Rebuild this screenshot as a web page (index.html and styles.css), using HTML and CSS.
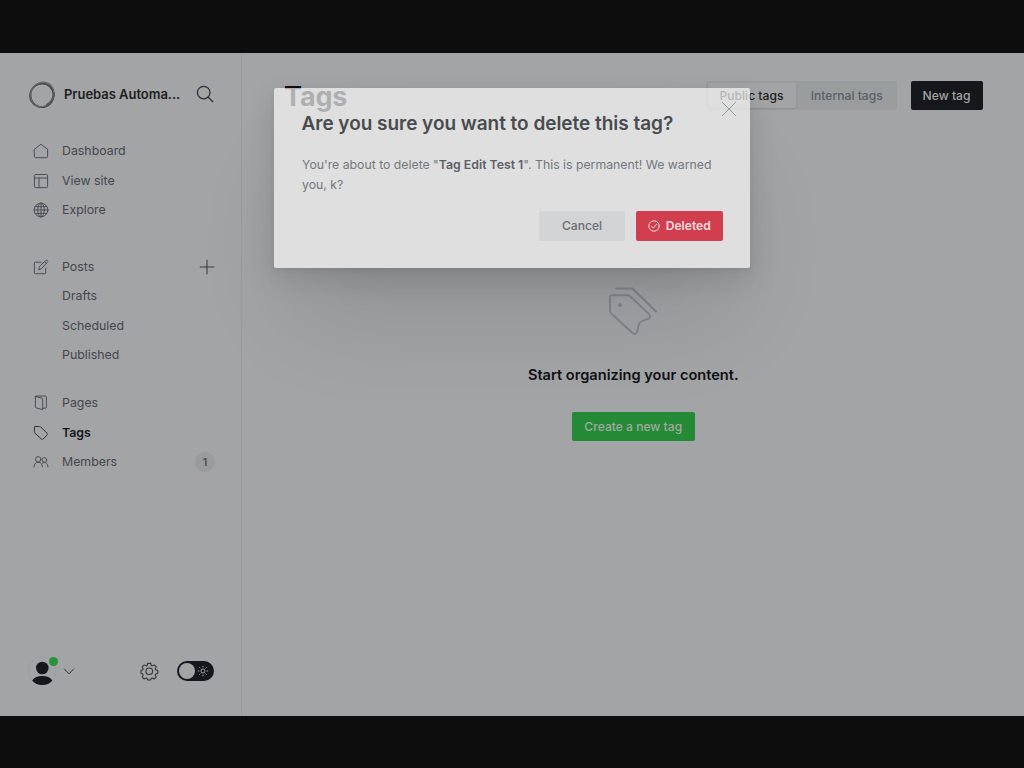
FILE: index.html
```html
<!DOCTYPE html>
<html lang="en">
<head>
<meta charset="utf-8">
<title>Tags</title>
<link rel="stylesheet" href="styles.css">
</head>
<body>
<div class="app">
  <aside class="sidebar">
    <header class="brand">
      <svg class="brand-logo" viewBox="0 0 28 28" fill="none"><ellipse cx="14" cy="14.3" rx="11.6" ry="11.8" stroke="#2d2e30" stroke-width="1.6"/><ellipse cx="13.8" cy="14.2" rx="12.2" ry="11.4" transform="rotate(-38 13.8 14.2)" stroke="#4a4c4f" stroke-width="1.3"/><ellipse cx="14.3" cy="13.5" rx="12.6" ry="11.4" transform="rotate(-62 14.3 13.5)" stroke="#66686b" stroke-width="1.2"/><path d="M25.8 11c.5 5-2.3 11-7.5 13.3" stroke="#55575a" stroke-width="2.2"/></svg>
      <span class="brand-name">Pruebas Automa...</span>
      <svg class="search" viewBox="0 0 18 18" fill="none" stroke="#2d2f33" stroke-width="1.25" stroke-linecap="round"><circle cx="7.7" cy="7.6" r="6.3"/><path d="m12.3 12.2 4.500 4.500"/></svg>
    </header>
    <nav class="nav">
      <ul class="group">
        <li class="item"><svg class="icon" viewBox="0 0 16 16"><path d="M1.400 6.300 8 1.200l6.600 5.100v7.200a1.200 1.200 0 0 1-1.200 1.200H2.600a1.200 1.200 0 0 1-1.200-1.200z"/></svg>Dashboard</li>
        <li class="item"><svg class="icon" viewBox="0 0 16 16"><rect x="1.400" y="1.500" width="13.200" height="13.100" rx="1"/><path d="M1.400 5h13.200M6 5v9.600"/></svg>View site</li>
        <li class="item"><svg class="icon" viewBox="0 0 16 16"><circle cx="8" cy="8" r="6.900"/><ellipse cx="8" cy="8" rx="3.300" ry="6.900"/><path d="M8 1.100v13.800M1.100 8h13.800M2.200 4.600h11.600M2.200 11.400h11.600"/></svg>Explore</li>
      </ul>
      <ul class="group posts">
        <li class="item"><svg class="icon" viewBox="0 0 16 16"><path d="M8 3.200H2.300a.9.9 0 0 0-.9.9v9.700c0 .5.4.9.9.9h9.500c.5 0 .9-.4.9-.9V9.300M5.800 10.400l.7-3L12.600 1.500a1.200 1.200 0 0 1 1.800 1.700L8.500 9.600zM11.400 2.700l1.800 1.700"/></svg>Posts<svg class="plus" viewBox="0 0 16 16"><path d="M8 .7v14.600M.7 8h14.600"/></svg></li>
        <li class="item sub">Drafts</li>
        <li class="item sub">Scheduled</li>
        <li class="item sub">Published</li>
      </ul>
      <ul class="group last">
        <li class="item"><svg class="icon" viewBox="0 0 16 16"><path d="M2.400 1.500 8.900 3.100a1 1 0 0 1 .8 1v10.500l-6.500-1.700a1 1 0 0 1-.8-1V1.800M2.200 1.700c.1-.5.4-.7.8-.7h9.300c.7 0 1.100.5 1.100 1.100v10c0 .7-.4 1.100-1.100 1.100H9.800"/></svg>Pages</li>
        <li class="item active"><svg class="icon" viewBox="0 0 16 16"><path d="M2.200 1.500h4.300c.5 0 .8.100 1.100.4l6.500 6.300c.6.6.6 1.100.1 1.700l-4.100 4.200c-.5.500-1.100.5-1.700 0L1.900 8c-.4-.4-.5-.7-.5-1.200V2.300c0-.5.300-.8.8-.8z"/></svg>Tags</li>
        <li class="item"><svg class="icon" viewBox="0 0 16 16"><circle cx="5.200" cy="5.300" r="2.700"/><path d="M1 12.900c0-2.800 1.600-4.700 4.200-4.700s4.200 1.900 4.200 4.700"/><circle cx="11.400" cy="5.900" r="2.300"/><path d="M9.400 9.100c3-1.600 5.500.3 5.500 3.800"/></svg>Members<span class="count">1</span></li>
      </ul>
    </nav>
    <footer class="footer">
      <div class="avatar">
        <svg viewBox="0 0 30 30"><circle cx="15" cy="15" r="14" fill="none" stroke="#9b9da0" stroke-width="1"/><circle cx="15.300" cy="12" r="6.300" fill="#15171a"/><path d="M5.200 24.600c2-3.300 5.600-4.700 10.100-4.700s8.100 1.400 10.100 4.700C23 27.900 19.500 29.100 15.300 29.100s-7.700-1.200-10.100-4.500z" fill="#15171a"/></svg>
        <span class="status"></span>
      </div>
      <svg class="chevron" viewBox="0 0 12 8"><path d="m1.200 1.800 4.800 5 4.800-5"/></svg>
      <svg class="gear" viewBox="0 0 20 20"><circle cx="10" cy="10" r="3.600"/><path d="M8.400 1.500h3.200l.7 2.300 1 .4 2.100-1.100 2.200 2.200-1.100 2.200.4 1 2.300.7v3.100l-2.300.8-.4 1 1.100 2.100-2.200 2.200-2.200-1.100-1 .4-.6 1.700H8.400l-.7-1.700-1-.4-2.200 1.100-2.200-2.200 1.100-2.100-.4-1-2-.8V9.200l2-.7.4-1-1.100-2.200 2.200-2.200 2.200 1.100 1-.4z"/></svg>
      <div class="switch"><span class="knob"></span><svg class="sun" viewBox="0 0 12 12"><circle cx="6" cy="6" r="2"/><path d="M6 .8v1.500M6 9.700v1.500M.8 6h1.500M9.700 6h1.500M2.300 2.300l1.100 1.100M8.600 8.600l1.100 1.100M9.700 2.300 8.600 3.400M3.400 8.600 2.300 9.700"/></svg></div>
    </footer>
  </aside>
  <main class="main">
    <header class="toolbar">
      <h1 class="title">Tags</h1>
      <div class="tabs"><span class="tab selected">Public tags</span><span class="tab">Internal tags</span></div>
      <button class="button dark">New tag</button>
    </header>
    <section class="empty">
      <svg class="empty-icon" viewBox="0 0 50 50"><path d="M3.700 9.200h15.500c1.500 0 2.500.5 3.500 1.500l18 17.200c2 2 1.600 4-.7 5l-5.500 2c-2.500.9-3 1.300-3.700 3.500l-1.500 6.700c-.9 3.200-3 3.700-5.300 1.400L3.500 27.700c-1-1-1.500-2-1.500-3.500V10.900c0-1.100.6-1.700 1.700-1.700zM8 2.500h16.500L48 25.500"/><circle cx="12" cy="19" r="1.500" fill="#84868a" stroke-width="1"/></svg>
      <h2 class="empty-title">Start organizing your content.</h2>
      <button class="button green">Create a new tag</button>
    </section>
  </main>
  <div class="modal" role="dialog">
    <svg class="close" viewBox="0 0 16 16"><path d="m0 0 16 16M16 0 0 16"/></svg>
    <h2 class="modal-title">Are you sure you want to delete this tag?</h2>
    <p class="modal-text">You're about to delete "<strong>Tag Edit Test 1</strong>". This is permanent! We warned you, k?</p>
    <div class="actions">
      <button class="button cancel">Cancel</button>
      <button class="button red"><svg class="check" viewBox="0 0 12 12"><circle cx="6" cy="6" r="5.200"/><path d="m3.300 6.200 1.900 1.900 3.700-4.200"/></svg>Deleted</button>
    </div>
  </div>
</div>
</body>
</html>
```
FILE: styles.css
```css
* { box-sizing: border-box; margin: 0; padding: 0; }
body {
  width: 1024px; height: 768px; overflow: hidden;
  padding: 53px 0 52px; background: #0d0d0d;
  font: 400 13px/20px Inter, sans-serif; color: #44474c;
}
svg { display: block; flex: none; overflow: visible; }
button { border: 0; font: inherit; }
ul { list-style: none; }
.app { position: relative; display: flex; height: 663px; background: #a3a4a6; overflow: hidden; }
.sidebar { width: 242px; flex: none; display: flex; flex-direction: column; border-right: 1px solid #999b9d; padding: 26px 26px 30px 27px; }
.brand { display: flex; align-items: center; height: 31px; padding-left: .5px; }
.brand-logo { width: 28px; height: 28px; }
.brand-name { margin-left: 8.500px; padding-bottom: 1px; font-size: 13px; letter-spacing: -.03px; font-weight: 600; color: #1d1f22; white-space: nowrap; width: 132px; }
.search { width: 18px; height: 18px; margin-bottom: 1px; }
.nav { padding: 26.600px 0 0 5.500px; }
.group { display: flex; flex-direction: column; }
.posts { margin-top: 27.500px; }
.last { margin-top: 19.200px; }
.item { display: flex; align-items: center; height: 29.360px; font-size: 12.350px; }
.sub { padding-left: 29.500px; }
.active { font-weight: 600; color: #15171a; }
.icon { width: 16px; height: 16px; margin-right: 13.500px; fill: none; stroke: #4b4e53; stroke-width: 1; stroke-linejoin: round; stroke-linecap: round; }
.active .icon { stroke: #303236; }
.plus { width: 16px; height: 16px; margin: 0 0 0 auto; stroke: #3b3e43; stroke-width: 1.100; }
.count { margin-left: auto; width: 20px; height: 20px; border-radius: 50%; background: #989c9d; font-size: 11px; font-weight: 500; text-align: center; }
.footer { margin-top: auto; display: flex; align-items: center; height: 30px; }
.avatar { position: relative; width: 30px; height: 30px; }
.status { position: absolute; right: -1px; top: 1px; width: 9px; height: 9px; border-radius: 50%; background: #26933a; }
.chevron { width: 12px; height: 8px; margin-left: 6px; fill: none; stroke: #303236; stroke-width: 1; }
.gear { width: 18.500px; height: 18.500px; margin-left: 65px; fill: none; stroke: #303236; stroke-width: 1.150; stroke-linejoin: round; }
.switch { display: flex; align-items: center; justify-content: space-between; width: 37px; height: 20px; margin-left: 18.500px; padding: 0 5px 0 2px; border-radius: 10px; background: #15171a; }
.knob { width: 16px; height: 16px; border-radius: 50%; background: #a3a4a6; }
.sun { width: 12px; height: 12px; fill: none; stroke: #a3a4a6; stroke-width: 1; }
.main { flex: 1; display: flex; flex-direction: column; padding: 28px 41.500px 0 42px; }
.toolbar { display: flex; height: 29px; }
.title { margin: 0 auto 0 0; font-size: 27px; line-height: 32px; font-weight: 700; letter-spacing: -.15px; color: #0d0f12; }
.tabs { display: flex; width: 191px; height: 29px; padding: 2px; border-radius: 2px; background: #999d9e; margin-right: 14px; }
.tab { flex: none; width: 102.500px; line-height: 25px; font-size: 12.100px; font-weight: 500; text-align: center; color: #5b6068; }
.selected { width: 88px; border-radius: 2px; background: #a3a4a6; color: #1d1f22; box-shadow: 0 1px 2px rgba(0, 0, 0, .09); }
.button { display: flex; align-items: center; justify-content: center; height: 29.500px; padding-top: 1px; border-radius: 2px; font-size: 12.100px; font-weight: 500; white-space: nowrap; }
.dark { width: 72px; height: 29px; padding-top: 0; background: #15171a; color: #a3a4a6; }
.empty { display: flex; flex-direction: column; align-items: center; padding-top: 176px; }
.empty-icon { width: 50px; height: 50px; fill: none; stroke: #84868a; stroke-width: 1.900; stroke-linecap: round; stroke-linejoin: round; }
.empty-title { margin-top: 29px; font-size: 14.600px; line-height: 20px; font-weight: 600; color: #101215; }
.green { width: 123px; height: 29px; padding-top: 0; margin-top: 27px; background: #258a35; color: #a3a9a4; }
.modal { position: absolute; left: 274px; top: 35px; width: 476px; height: 180px; padding: 24px 27.500px 28px 28px; border-radius: 2px; background: rgba(251, 251, 251, .684); box-shadow: 0 2px 5px rgba(0, 0, 0, .05), 0 10px 30px rgba(0, 0, 0, .12), 0 65px 100px -20px rgba(0, 0, 0, .12); }
.close { position: absolute; right: 14px; top: 14px; width: 14px; height: 14px; stroke: #8d8f91; stroke-width: 1; }
.modal-title { margin-left: -.5px; font-size: 19px; line-height: 24px; font-weight: 600; letter-spacing: -.03px; color: #494b4e; white-space: nowrap; }
.modal-text { margin-top: 19px; font-size: 12.270px; line-height: 20px; color: #73777c; }
.modal-text strong { font-weight: 600; color: #5c6066; }
.actions { display: flex; justify-content: flex-end; gap: 11px; margin-top: 16px; }
.cancel { width: 86px; background: #d3d4d6; color: #6b6e73; }
.red { width: 86.500px; background: #d13f4e; color: #eddcde; font-weight: 600; gap: 6px; }
.check { width: 12px; height: 12px; fill: none; stroke: #eddcde; stroke-width: 1; }
```
